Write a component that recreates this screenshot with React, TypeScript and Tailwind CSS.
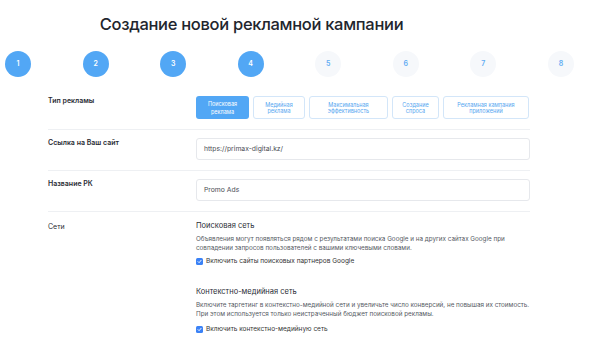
import React from "react";

const steps = [1, 2, 3, 4, 5, 6, 7, 8];
const adTypes = [
  { l1: "Поисковая", l2: "реклама", w: "w-[53px]", active: true },
  { l1: "Медийная", l2: "реклама", w: "w-[52px]", active: false },
  { l1: "Максимальная", l2: "эффективность", w: "w-[79px]", active: false },
  { l1: "Создание", l2: "спроса", w: "w-[47px]", active: false },
  { l1: "Рекламная кампания", l2: "приложений", w: "w-[86px]", active: false },
];

const Check = ({ label }: { label: string }) => (
  <div className="flex items-center gap-[3px] h-[9px]">
    <span className="w-[7px] h-[7px] rounded-[1.5px] bg-[#3b82f6] flex items-center justify-center">
      <svg width="5" height="5" viewBox="0 0 10 10" fill="none">
        <path d="M2 5.2 L4.2 7.4 L8.2 2.6" stroke="white" strokeWidth="1.8" strokeLinecap="round" strokeLinejoin="round" />
      </svg>
    </span>
    <span className="text-[6.5px] leading-[9px] text-[#333]">{label}</span>
  </div>
);

export default function App() {
  return (
    <div className="w-[600px] h-[344px] bg-white overflow-hidden font-['Inter',sans-serif] text-[#1f2430]">
      <div className="w-[503px] pt-[12px] text-center">
        <h1 className="text-[16.5px] leading-[24px] font-medium tracking-[-0.3px] text-[#22252d]">
          Создание новой рекламной кампании
        </h1>
      </div>

      <div className="ml-[5px] w-[569px] mt-[15px] flex justify-between">
        {steps.map((s) => (
          <div
            key={s}
            className={
              s <= 4
                ? "w-[26px] h-[26px] rounded-full bg-[#52a7f5] text-white text-[7px] font-semibold flex items-center justify-center"
                : "w-[26px] h-[26px] rounded-full bg-[#f6f8fb] text-[#62acf3] text-[7px] font-semibold flex items-center justify-center"
            }
          >
            {s}
          </div>
        ))}
      </div>

      <div className="ml-[48px] w-[482px] mt-[11px]">
        {/* Тип рекламы */}
        <div className="flex pt-[8px] pb-[10px] border-b border-[#eef0f3]">
          <div className="w-[148px] text-[7px] leading-[9px] font-semibold text-[#2a2d35]">Тип рекламы</div>
          <div className="flex gap-[4px]">
            {adTypes.map((t) => (
              <div
                key={t.l1}
                className={
                  t.active
                    ? `${t.w} h-[23px] rounded-[3px] bg-[#52a7f5] text-white text-[5.5px] leading-[8px] flex flex-col items-center justify-center`
                    : `${t.w} h-[23px] rounded-[3px] border border-[#d3e6f9] text-[#55a6f0] text-[5.5px] leading-[6px] flex flex-col items-center justify-center`
                }
              >
                <span>{t.l1}</span>
                <span>{t.l2}</span>
              </div>
            ))}
          </div>
        </div>

        {/* Ссылка */}
        <div className="flex pt-[8px] pb-[10px] border-b border-[#eef0f3]">
          <div className="w-[148px] text-[7px] leading-[9px] font-semibold text-[#2a2d35]">Ссылка на Ваш сайт</div>
          <div className="flex-1 h-[22px] rounded-[3px] border border-[#e6e8ec] px-[7px] flex items-center text-[6.8px] text-[#4a4d55]">
            https://primax-digital.kz/
          </div>
        </div>

        {/* Название */}
        <div className="flex pt-[8px] pb-[10px] border-b border-[#eef0f3]">
          <div className="w-[148px] text-[7px] leading-[9px] font-semibold text-[#2a2d35]">Название РК</div>
          <div className="flex-1 h-[22px] rounded-[3px] border border-[#e6e8ec] px-[7px] flex items-center text-[6.8px] text-[#4a4d55]">
            Promo Ads
          </div>
        </div>

        {/* Сети */}
        <div className="flex pt-[9px]">
          <div className="w-[148px] text-[7px] leading-[9px] text-[#2a2d35] pt-[1px]">Сети</div>
          <div className="flex-1 flex flex-col">
            <div className="text-[7.5px] leading-[10px] text-[#2a2d35]">Поисковая сеть</div>
            <p className="mt-[4px] text-[6.3px] leading-[9px] text-[#555a63] whitespace-nowrap">
              Объявления могут появляться рядом с результатами поиска Google и на других сайтах Google при
              <br />
              совпадении запросов пользователей с вашими ключевыми словами.
            </p>
            <div className="mt-[4px]">
              <Check label="Включить сайты поисковых партнеров Google" />
            </div>

            <div className="mt-[21px] text-[7.5px] leading-[10px] text-[#2a2d35]">Контекстно-медийная сеть</div>
            <p className="mt-[4px] text-[6.3px] leading-[9px] text-[#555a63] whitespace-nowrap">
              Включите таргетинг в контекстно-медийной сети и увеличьте число конверсий, не повышая их стоимость.
              <br />
              При этом используется только неистраченный бюджет поисковой рекламы.
            </p>
            <div className="mt-[6px]">
              <Check label="Включить контекстно-медийную сеть" />
            </div>
          </div>
        </div>
      </div>
    </div>
  );
}
